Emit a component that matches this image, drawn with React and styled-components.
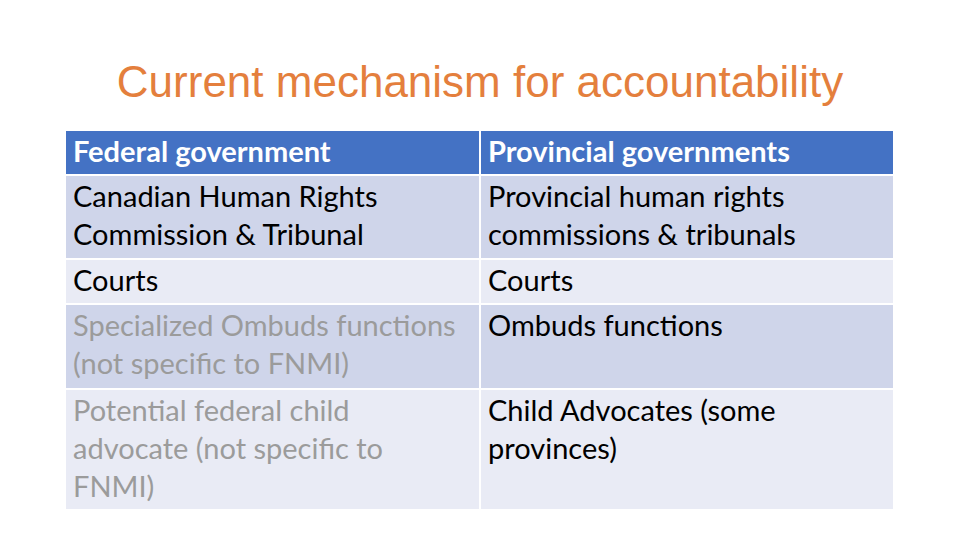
import React from "react";
import styled, { createGlobalStyle } from "styled-components";

const Global = createGlobalStyle`
  html, body { margin: 0; padding: 0; background: #ffffff; }
  body { width: 960px; height: 540px; overflow: hidden; }
`;

const Slide = styled.div`
  width: 960px;
  height: 540px;
  background: #ffffff;
  display: flex;
  flex-direction: column;
  align-items: flex-start;
`;

const Title = styled.h1`
  margin: 0;
  padding-top: 57px;
  width: 100%;
  text-align: center;
  font-family: "Liberation Sans", Arial, sans-serif;
  font-weight: 400;
  font-size: 44px;
  line-height: 50px;
  color: #e47f3d;
`;

const Table = styled.div`
  margin-top: 24px;
  margin-left: 66px;
  width: 827px;
  display: grid;
  grid-template-columns: 413px 412px;
  grid-template-rows: 43px 82px 43px 83px 119px;
  column-gap: 2px;
  row-gap: 2px;
  background: #ffffff;
`;

const Cell = styled.div`
  background: ${(p) => (p.$head ? "#4472c4" : p.$odd ? "#cfd5ea" : "#e9ebf5")};
  color: ${(p) => (p.$head ? "#ffffff" : p.$muted ? "#9b9b9b" : "#000000")};
  font-family: Lato, "Open Sans", sans-serif;
  font-weight: ${(p) => (p.$head ? 700 : 400)};
  font-size: 29px;
  line-height: 38px;
  padding: 1px 4px 0 7px;
  overflow: hidden;
`;

const rows = [
  { head: true, left: "Federal government", right: "Provincial governments" },
  { odd: true, left: "Canadian Human Rights\nCommission & Tribunal", right: "Provincial human rights\ncommissions & tribunals" },
  { odd: false, left: "Courts", right: "Courts" },
  { odd: true, muted: true, left: "Specialized Ombuds functions\n(not specific to FNMI)", right: "Ombuds functions" },
  { odd: false, muted: true, left: "Potential federal child\nadvocate (not specific to\nFNMI)", right: "Child Advocates (some\nprovinces)" },
];

const Line = styled.span`
  display: block;
  white-space: nowrap;
`;

const Text = ({ value }) =>
  value.split("\n").map((l, i) => <Line key={i}>{l}</Line>);

export default function App() {
  return (
    <>
      <Global />
      <Slide>
        <Title>Current mechanism for accountability</Title>
        <Table>
          {rows.map((r, i) => (
            <React.Fragment key={i}>
              <Cell $head={r.head} $odd={r.odd} $muted={r.muted}>
                <Text value={r.left} />
              </Cell>
              <Cell $head={r.head} $odd={r.odd}>
                <Text value={r.right} />
              </Cell>
            </React.Fragment>
          ))}
        </Table>
      </Slide>
    </>
  );
}
